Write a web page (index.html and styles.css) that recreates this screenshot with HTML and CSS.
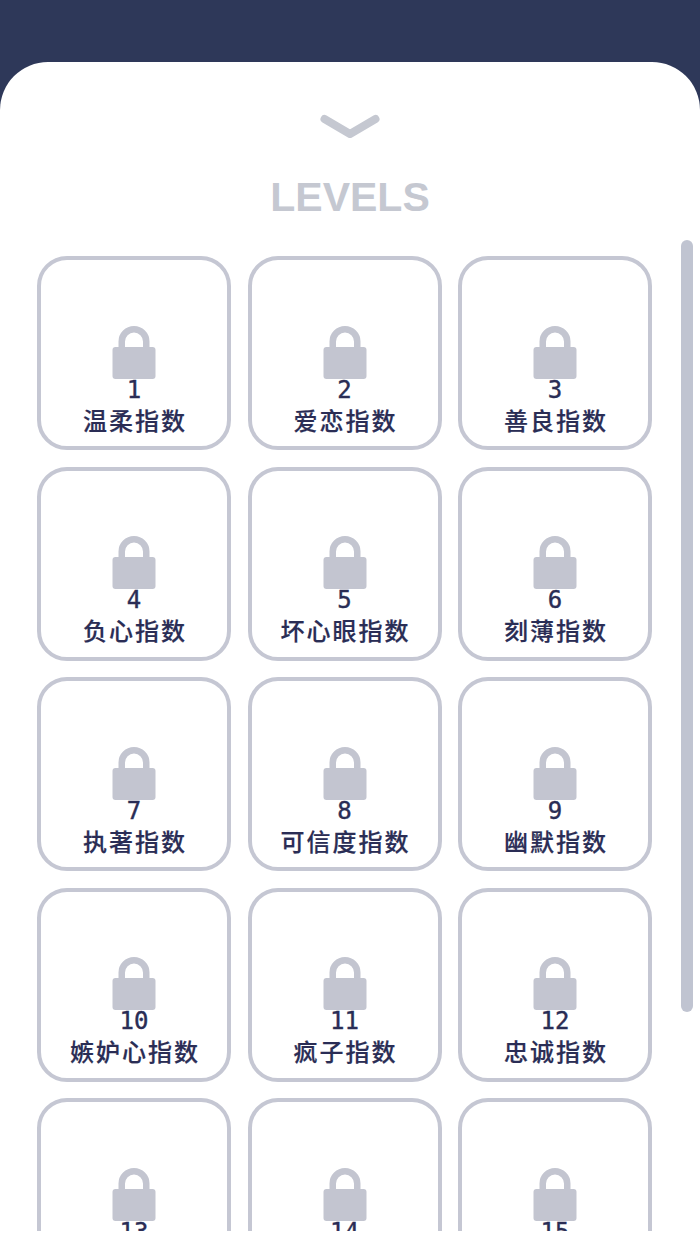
FILE: index.html

```html
<!DOCTYPE html>
<html lang="zh-CN">
<head>
  <meta charset="UTF-8" />
  <meta name="viewport" content="width=device-width, initial-scale=1.0" />
  <title>Levels</title>
  <link rel="stylesheet" href="styles.css">
</head>
<body>
  <div class="sheet">
    <svg class="chevron" width="66" height="30" viewBox="0 0 66 30">
      <path d="M7.5 6 L33 21 L58.5 6" />
    </svg>
    <h1 class="title">LEVELS</h1>

    <div class="levels">
      <div class="scrollbar"></div>
      <div class="grid" id="grid"></div>
    </div>
  </div>

  <script src="levels.js"></script>
</body>
</html>
```

FILE: levels.js

```js
const names = [
  '温柔指数', '爱恋指数', '善良指数',
  '负心指数', '坏心眼指数', '刻薄指数',
  '执著指数', '可信度指数', '幽默指数',
  '嫉妒心指数', '疯子指数', '忠诚指数',
  '', '', ''
];

const lock = `
  <svg class="lock" width="44" height="54" viewBox="0 0 44 54">
    <path class="shackle" d="M9.75 24 V15.5 a12.25 12.25 0 0 1 24.5 0 V24" />
    <rect class="body" x="0.5" y="21" width="43" height="32" rx="3" />
  </svg>`;

const grid = document.getElementById('grid');

names.forEach((name, i) => {
  const card = document.createElement('div');
  card.className = 'card';
  card.innerHTML = `${lock}
    <div class="num">${i + 1}</div>
    <div class="name">${name}</div>`;
  grid.appendChild(card);
});
```

FILE: styles.css

```css
* {
  box-sizing: border-box;
}
body {
  margin: 0;
  height: 1244px;
  overflow: hidden;
  background: #2e3859;
  font-family: "Noto Sans CJK SC", "Noto Sans", sans-serif;
}
.sheet {
  margin-top: 62px;
  height: 1182px;
  background: #fff;
  border-radius: 48px 48px 0 0;
  padding-top: 51px;
  display: flex;
  flex-direction: column;
  align-items: center;
}
.chevron {
  display: block;
  flex: none;
}
.chevron path {
  fill: none;
  stroke: #c5c8d1;
  stroke-width: 8;
  stroke-linecap: round;
  stroke-linejoin: round;
}
.title {
  margin: 29px 0 0;
  height: 50px;
  font-family: "Liberation Sans", sans-serif;
  font-size: 41px;
  line-height: 50px;
  font-weight: 700;
  color: #c5c8d1;
}
.levels {
  position: relative;
  flex: none;
  align-self: stretch;
  height: 991px;
  margin-top: 18px;
  overflow: hidden;
}
.scrollbar {
  position: absolute;
  top: 0;
  left: 681px;
  width: 12px;
  height: 772px;
  border-radius: 6px;
  background: #c0c4d1;
}
.grid {
  display: grid;
  grid-template-columns: repeat(3, 194px);
  grid-auto-rows: 194px;
  gap: 16.5px;
  padding: 16px 0 0 37px;
}
.card {
  display: flex;
  flex-direction: column;
  align-items: center;
  padding-top: 65.5px;
  border: 4.5px solid #c5c7d3;
  border-radius: 30px;
}
.lock {
  display: block;
  flex: none;
}
.shackle {
  fill: none;
  stroke: #c3c5d0;
  stroke-width: 6.5;
}
.body {
  fill: #c3c5d0;
}
.num {
  height: 24px;
  margin-top: -2px;
  font-family: "DejaVu Sans Mono", monospace;
  font-size: 24px;
  line-height: 24px;
  -webkit-text-stroke: 0.4px #2a2d55;
  color: #2a2d55;
}
.name {
  margin-top: 1px;
  padding-left: 2px;
  font-size: 24px;
  line-height: 34px;
  font-weight: 500;
  letter-spacing: 2px;
  -webkit-text-stroke: 0.2px #2a2d55;
  color: #2a2d55;
  white-space: nowrap;
}
```
